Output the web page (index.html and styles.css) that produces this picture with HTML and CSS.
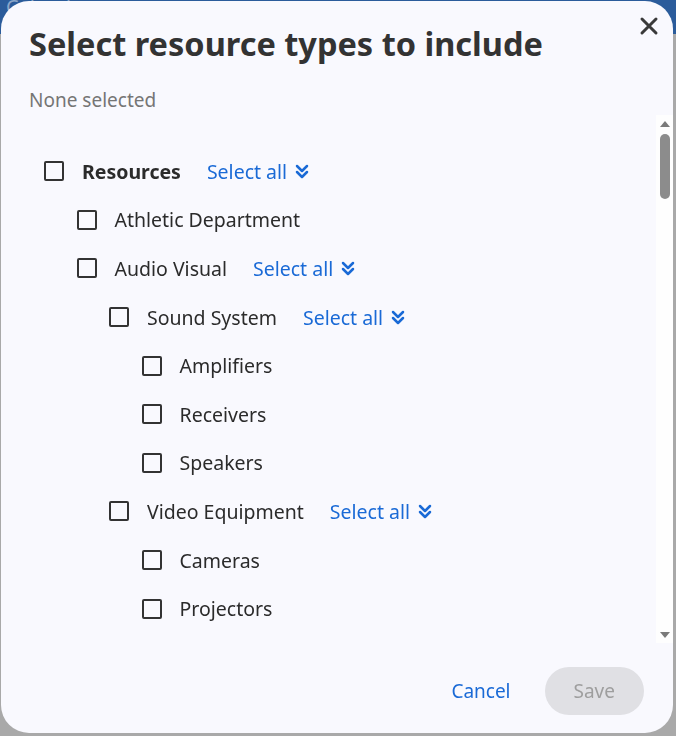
FILE: index.html
```html
<!DOCTYPE html>
<html lang="en">
<head>
    <meta charset="UTF-8">
    <meta name="viewport" content="width=device-width, initial-scale=1.0">
    <title>Select resource types</title>
    <link rel="stylesheet" href="styles.css">
</head>
<body>
    <div class="page-header">Calendar</div>

    <div class="dialog" role="dialog" aria-labelledby="dialogTitle">
        <button type="button" class="close-btn" aria-label="Close">
            <svg viewBox="0 0 20 20" width="20" height="20"><path d="M3 3L17 17M17 3L3 17"/></svg>
        </button>

        <h2 id="dialogTitle" class="dialog-title">Select resource types to include</h2>
        <p class="selected-count">None selected</p>

        <div class="tree-area">
            <div class="tree-scroll">
                <ul class="tree">
                    <li>
                        <div class="row">
                            <input type="checkbox" id="r0">
                            <label for="r0" class="top">Resources</label>
                            <a href="#" class="select-all">Select all
                                <svg viewBox="0 0 16 16" width="16" height="16"><path d="M3 3l5 5 5-5M3 9l5 5 5-5"/></svg>
                            </a>
                        </div>
                        <ul>
                            <li><div class="row"><input type="checkbox" id="r1"><label for="r1">Athletic Department</label></div></li>
                            <li>
                                <div class="row">
                                    <input type="checkbox" id="r2">
                                    <label for="r2">Audio Visual</label>
                                    <a href="#" class="select-all">Select all
                                        <svg viewBox="0 0 16 16" width="16" height="16"><path d="M3 3l5 5 5-5M3 9l5 5 5-5"/></svg>
                                    </a>
                                </div>
                                <ul>
                                    <li>
                                        <div class="row">
                                            <input type="checkbox" id="r3">
                                            <label for="r3">Sound System</label>
                                            <a href="#" class="select-all">Select all
                                                <svg viewBox="0 0 16 16" width="16" height="16"><path d="M3 3l5 5 5-5M3 9l5 5 5-5"/></svg>
                                            </a>
                                        </div>
                                        <ul>
                                            <li><div class="row"><input type="checkbox" id="r4"><label for="r4">Amplifiers</label></div></li>
                                            <li><div class="row"><input type="checkbox" id="r5"><label for="r5">Receivers</label></div></li>
                                            <li><div class="row"><input type="checkbox" id="r6"><label for="r6">Speakers</label></div></li>
                                        </ul>
                                    </li>
                                    <li>
                                        <div class="row">
                                            <input type="checkbox" id="r7">
                                            <label for="r7">Video Equipment</label>
                                            <a href="#" class="select-all">Select all
                                                <svg viewBox="0 0 16 16" width="16" height="16"><path d="M3 3l5 5 5-5M3 9l5 5 5-5"/></svg>
                                            </a>
                                        </div>
                                        <ul>
                                            <li><div class="row"><input type="checkbox" id="r8"><label for="r8">Cameras</label></div></li>
                                            <li><div class="row"><input type="checkbox" id="r9"><label for="r9">Projectors</label></div></li>
                                            <li><div class="row"><input type="checkbox" id="r10"><label for="r10">Screens</label></div></li>
                                            <li><div class="row"><input type="checkbox" id="r11"><label for="r11">Televisions</label></div></li>
                                        </ul>
                                    </li>
                                    <li><div class="row"><input type="checkbox" id="r12"><label for="r12">Microphones</label></div></li>
                                    <li><div class="row"><input type="checkbox" id="r13"><label for="r13">Document Cameras</label></div></li>
                                </ul>
                            </li>
                            <li><div class="row"><input type="checkbox" id="r14"><label for="r14">Auditorium</label></div></li>
                            <li><div class="row"><input type="checkbox" id="r15"><label for="r15">Cafeteria</label></div></li>
                            <li><div class="row"><input type="checkbox" id="r16"><label for="r16">Classrooms</label></div></li>
                            <li><div class="row"><input type="checkbox" id="r17"><label for="r17">Computer Labs</label></div></li>
                            <li><div class="row"><input type="checkbox" id="r18"><label for="r18">Conference Rooms</label></div></li>
                            <li><div class="row"><input type="checkbox" id="r19"><label for="r19">Gymnasium</label></div></li>
                            <li><div class="row"><input type="checkbox" id="r20"><label for="r20">Laptop Carts</label></div></li>
                            <li><div class="row"><input type="checkbox" id="r21"><label for="r21">Library</label></div></li>
                            <li><div class="row"><input type="checkbox" id="r22"><label for="r22">Music Room</label></div></li>
                            <li><div class="row"><input type="checkbox" id="r23"><label for="r23">Science Labs</label></div></li>
                            <li><div class="row"><input type="checkbox" id="r24"><label for="r24">Stage</label></div></li>
                            <li><div class="row"><input type="checkbox" id="r25"><label for="r25">Vehicles</label></div></li>
                        </ul>
                    </li>
                </ul>
            </div>
            <div class="scrollbar" aria-hidden="true">
                <span class="sb-arrow up"></span>
                <div class="sb-track"><span class="sb-thumb"></span></div>
                <span class="sb-arrow down"></span>
            </div>
        </div>

        <div class="dialog-footer">
            <button type="button" class="btn-cancel">Cancel</button>
            <button type="button" class="btn-save" disabled>Save</button>
        </div>
    </div>
</body>
</html>
```

FILE: styles.css
```css
html, body {
    margin: 0;
    height: 100%;
}
body {
    font-family: "Noto Sans", "Open Sans", sans-serif;
    background-color: #a9a9a9;
    color: #333;
    overflow: hidden;
}
.page-header {
    height: 34px;
    padding-left: 6px;
    background-color: #2b5c9b;
    color: #8aa6c9;
    font-size: 20px;
    line-height: 14px;
}

/* modal */
.dialog {
    position: fixed;
    top: 1px;
    left: 1px;
    width: 672px;
    height: 732px;
    box-sizing: border-box;
    padding: 23px 29px 18px 0;
    background-color: #f9f9fe;
    border-radius: 28px;
    display: flex;
    flex-direction: column;
}
.close-btn {
    position: absolute;
    top: 15px;
    right: 14px;
    padding: 0;
    border: none;
    background: none;
    cursor: pointer;
}
.close-btn svg {
    display: block;
    stroke: #3a3a3a;
    stroke-width: 3;
    stroke-linecap: round;
}
.dialog-title {
    margin: 0 0 0 28px;
    font-size: 32.5px;
    line-height: 40px;
    font-weight: 700;
    color: #333;
}
.selected-count {
    margin: 24px 0 0 28px;
    font-size: 19px;
    line-height: 24px;
    color: #757575;
}

/* tree */
.tree-area {
    flex: 1;
    min-height: 0;
    display: flex;
    margin: 3px -29px 0 0;
}
.tree-scroll {
    flex: 1;
    padding-top: 32px;
    overflow-y: auto;
    scrollbar-width: none;
}
.tree,
.tree ul {
    list-style: none;
    margin: 0;
    padding: 0;
}
.tree {
    padding-left: 43px;
}
.tree ul {
    padding-left: 32.5px;
}
.row {
    display: flex;
    align-items: center;
    height: 48.6px;
    font-size: 19.5px;
}
.row input {
    appearance: none;
    width: 20px;
    height: 20px;
    margin: 0 18px 0 0;
    border: 2px solid #333;
    border-radius: 2px;
    background: transparent;
    box-sizing: border-box;
    flex-shrink: 0;
}
.row label {
    color: #2b2b2b;
}
.row label.top {
    font-weight: 700;
}
.select-all {
    display: flex;
    align-items: center;
    gap: 7px;
    margin-left: 26px;
    color: #1a6ad6;
    text-decoration: none;
}
.select-all svg {
    fill: none;
    stroke: #1a6ad6;
    stroke-width: 2.5;
    stroke-linecap: round;
    stroke-linejoin: round;
}

/* scrollbar */
.scrollbar {
    width: 17px;
    flex-shrink: 0;
    display: flex;
    flex-direction: column;
    background-color: #fefefe;
}
.sb-arrow {
    height: 17px;
    display: flex;
    align-items: center;
    justify-content: center;
}
.sb-arrow::before {
    content: "";
    border-left: 5px solid transparent;
    border-right: 5px solid transparent;
}
.sb-arrow.up::before {
    border-bottom: 6px solid #7a7a7a;
}
.sb-arrow.down::before {
    border-top: 6px solid #7a7a7a;
}
.sb-track {
    flex: 1;
    padding-top: 2px;
}
.sb-thumb {
    display: block;
    width: 10px;
    height: 65px;
    margin: 0 auto;
    border-radius: 5px;
    background-color: #8c8c8c;
}

/* footer */
.dialog-footer {
    display: flex;
    justify-content: flex-end;
    align-items: center;
    gap: 16px;
    margin-top: 24px;
}
.dialog-footer button {
    font-family: inherit;
    font-size: 19px;
    border: none;
    cursor: pointer;
}
.btn-cancel {
    padding: 0 18px;
    background: none;
    color: #1a6ad6;
}
.btn-save {
    height: 48px;
    padding: 0 29px;
    border-radius: 24px;
    background-color: #e0e0e4;
    color: #9e9e9e;
}
```
